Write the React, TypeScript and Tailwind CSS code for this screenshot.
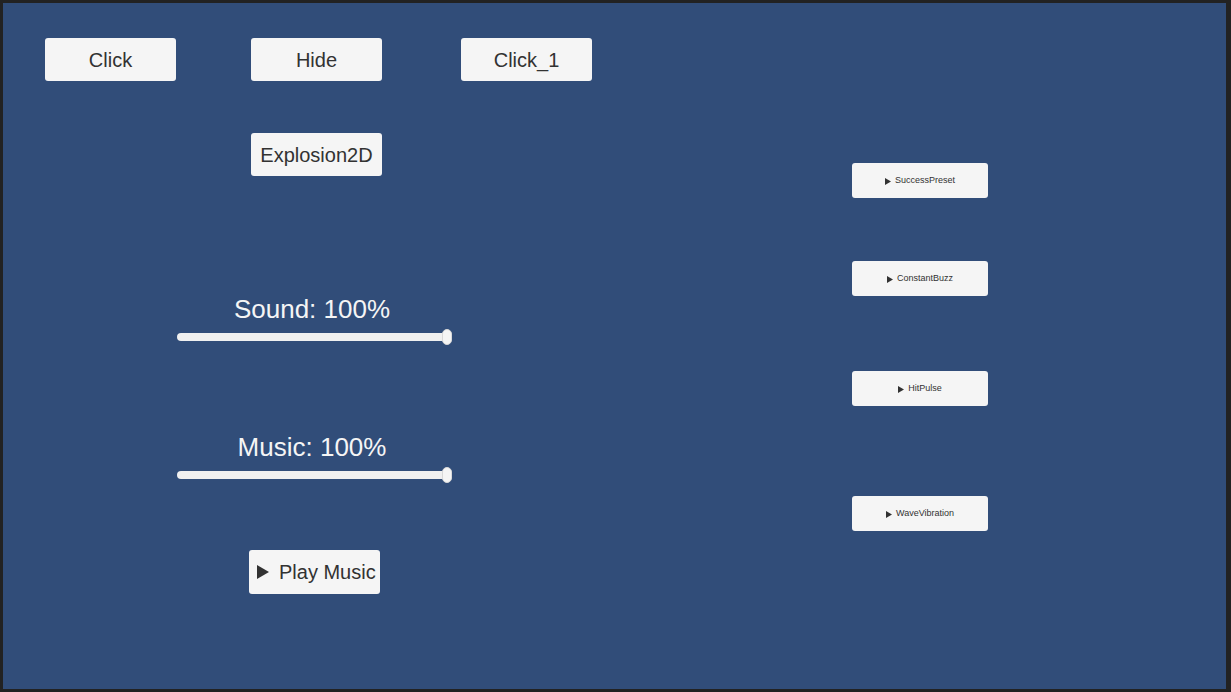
import React from 'react';

const font = { fontFamily: '"Liberation Sans", Arial, sans-serif' };

function Btn({ label, className = '' }: { label: string; className?: string }) {
    return (
        <div className={`w-[131px] h-[43px] shrink-0 rounded-[3px] bg-[#f5f5f5] flex items-center justify-center text-[20px] text-[#323232] ${className}`}>
            {label}
        </div>
    );
}

function Slider({ label, className = '' }: { label: string; className?: string }) {
    return (
        <div className={`w-[270px] ml-[132px] ${className}`}>
            <div className="h-[24px] leading-[24px] text-center text-[26px] text-[#f5f5f5] whitespace-nowrap">{label}</div>
            <div className="relative mt-[8px] h-[16px]">
                <div className="absolute left-0 right-0 top-[4px] h-[8px] rounded-full bg-[#f0f0f0]" />
                <div className="absolute right-[-5px] top-0 w-[10px] h-[16px] rounded-full bg-[#f5f5f5] border border-[#d8d8d8]" />
            </div>
        </div>
    );
}

function HapticBtn({ label, className = '' }: { label: string; className?: string }) {
    return (
        <div className={`w-[136px] h-[35px] rounded-[3px] bg-[#f5f5f5] flex items-center justify-center gap-[4px] pt-[1px] text-[9px] text-[#323232] ${className}`}>
            <svg width="6" height="7" viewBox="0 0 6 7"><polygon points="0,0 6,3.5 0,7" fill="#323232" /></svg>
            <span>{label}</span>
        </div>
    );
}

export default function App() {
    return (
        <div className="w-[1231px] h-[692px] bg-[#222222] pt-[3px] pl-[3px] pr-[5px] pb-[3px] overflow-hidden" style={font}>
            <div className="w-full h-full bg-[#314d79] flex">
                {/* left group */}
                <div className="w-[849px] shrink-0 pl-[42px] pt-[35px] flex flex-col">
                    <div className="flex">
                        <Btn label="Click" />
                        <Btn label="Hide" className="ml-[75px]" />
                        <Btn label="Click_1" className="ml-[79px]" />
                    </div>
                    <Btn label="Explosion2D" className="mt-[52px] ml-[206px]" />
                    <Slider label="Sound: 100%" className="mt-[121px]" />
                    <Slider label="Music: 100%" className="mt-[90px]" />
                    <div className="mt-[67px] ml-[204px] w-[131px] h-[44px] rounded-[3px] bg-[#f5f5f5] flex items-center pl-[8px] gap-[10px] text-[20px] text-[#323232] whitespace-nowrap">
                        <svg width="12" height="14" viewBox="0 0 12 14"><polygon points="0,0 12,7 0,14" fill="#323232" /></svg>
                        <span>Play Music</span>
                    </div>
                </div>
                {/* haptics */}
                <div className="pt-[160px] flex flex-col">
                    <HapticBtn label="SuccessPreset" />
                    <HapticBtn label="ConstantBuzz" className="mt-[63px]" />
                    <HapticBtn label="HitPulse" className="mt-[75px]" />
                    <HapticBtn label="WaveVibration" className="mt-[90px]" />
                </div>
            </div>
        </div>
    );
}
